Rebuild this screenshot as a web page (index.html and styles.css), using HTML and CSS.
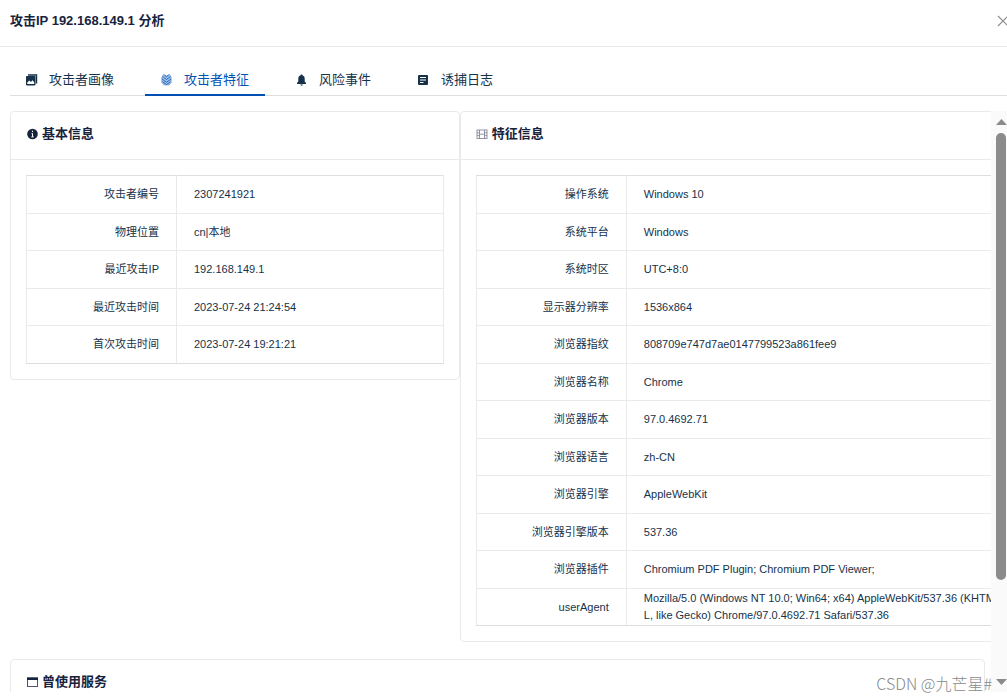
FILE: index.html
```html
<!DOCTYPE html>
<html lang="zh-CN">
<head>
<meta charset="utf-8">
<title>攻击IP 192.168.149.1 分析</title>
<link rel="stylesheet" href="styles.css">
</head>
<body>
<header class="drawer-header">
  <h1 class="drawer-title">攻击IP 192.168.149.1 分析</h1>
  <button class="close" type="button" aria-label="关闭">
    <svg width="12" height="12" viewBox="0 0 12 12" fill="none" stroke="#8c8c8c" stroke-width="1.1"><path d="M1 1l10 10M11 1L1 11"/></svg>
  </button>
</header>

<nav class="tabs" role="tablist">
  <button class="tab" type="button" role="tab" aria-selected="false">
    <svg class="icon" viewBox="0 0 13 13"><path d="M3 2h8.500v8.500" fill="none" stroke="currentColor" stroke-width="1.400"/><rect x="1" y="3" width="9.500" height="9.500" rx="1" fill="currentColor"/><path d="M2.300 11V9.500l2-2 1.600 1.600L7.600 7.200l1.600 2V11z" fill="#fff"/></svg>
    攻击者画像
  </button>
  <button class="tab active" type="button" role="tab" aria-selected="true">
    <svg class="icon" viewBox="0 0 13 13" fill="none" stroke="currentColor" stroke-width=".8"><path d="M3.500 1.500L6.500 3l3-1.500 1.700 3v5L9 12H4L1.800 9.500v-5z" fill="currentColor" fill-opacity=".35" stroke-opacity=".45" stroke-linejoin="round"/><path d="M2.500 3.500l4 3 4-3M2 6l4.500 3.200L11 6M2.500 8.700l4 2.800 4-2.800M4.500 2l2 1.800L8.500 2"/></svg>
    攻击者特征
  </button>
  <button class="tab" type="button" role="tab" aria-selected="false">
    <svg class="icon" viewBox="0 0 13 13" fill="currentColor"><path d="M5.700 2.300V1.500h1.600v.8c1.600.4 2.400 1.700 2.400 3.300v3l1.300 1.500v.9H2v-.9l1.300-1.500v-3c0-1.600.8-2.900 2.400-3.300zM5.300 11.500h2.400c0 .8-.5 1.200-1.200 1.200s-1.200-.4-1.200-1.200z"/></svg>
    风险事件
  </button>
  <button class="tab" type="button" role="tab" aria-selected="false">
    <svg class="icon" viewBox="0 0 13 13"><rect x="1" y="2" width="10" height="10" rx="1" fill="currentColor"/><path d="M3 4.500h6M3 7h6M3 9.500h3.500" stroke="#fff"/></svg>
    诱捕日志
  </button>
</nav>

<div class="scroller">
  <main class="viewport">
    <div class="cards">
      <section class="card">
        <h2 class="card-title">
          <svg class="card-icon" viewBox="0 0 12 12"><circle cx="6.500" cy="6" r="5.300" fill="#17233d"/><path d="M6.500 2.700v1.400M5.600 5.500h.9v3.300M5.300 8.900h2.400" stroke="#fff" fill="none"/></svg>
          基本信息
        </h2>
        <div class="card-body">
          <table class="info">
            <tr><th scope="row">攻击者编号</th><td>2307241921</td></tr>
            <tr><th scope="row">物理位置</th><td>cn|本地</td></tr>
            <tr><th scope="row">最近攻击IP</th><td>192.168.149.1</td></tr>
            <tr><th scope="row">最近攻击时间</th><td>2023-07-24 21:24:54</td></tr>
            <tr><th scope="row">首次攻击时间</th><td>2023-07-24 19:21:21</td></tr>
          </table>
        </div>
      </section>
      <section class="card">
        <h2 class="card-title">
          <svg class="card-icon" viewBox="0 0 12 12" fill="none" stroke="#848b9b" stroke-width=".9"><rect x="1" y="2" width="10" height="8.500"/><path d="M3.500 2v8.500M8.500 2v8.500M3.500 6.200h5M1 4.800h2.500M1 7.600h2.500M8.500 4.800H11M8.500 7.600H11"/></svg>
          特征信息
        </h2>
        <div class="card-body">
          <table class="info">
            <tr><th scope="row">操作系统</th><td>Windows 10</td></tr>
            <tr><th scope="row">系统平台</th><td>Windows</td></tr>
            <tr><th scope="row">系统时区</th><td>UTC+8:0</td></tr>
            <tr><th scope="row">显示器分辨率</th><td>1536x864</td></tr>
            <tr><th scope="row">浏览器指纹</th><td>808709e747d7ae0147799523a861fee9</td></tr>
            <tr><th scope="row">浏览器名称</th><td>Chrome</td></tr>
            <tr><th scope="row">浏览器版本</th><td>97.0.4692.71</td></tr>
            <tr><th scope="row">浏览器语言</th><td>zh-CN</td></tr>
            <tr><th scope="row">浏览器引擎</th><td>AppleWebKit</td></tr>
            <tr><th scope="row">浏览器引擎版本</th><td>537.36</td></tr>
            <tr><th scope="row">浏览器插件</th><td>Chromium PDF Plugin; Chromium PDF Viewer;</td></tr>
            <tr><th scope="row">userAgent</th><td>Mozilla/5.0 (Windows NT 10.0; Win64; x64) AppleWebKit/537.36 (KHTML, like Gecko) Chrome/97.0.4692.71 Safari/537.36</td></tr>
          </table>
        </div>
      </section>
    </div>
    <section class="card services">
      <h2 class="card-title">
        <svg class="card-icon" viewBox="0 0 12 12"><rect x="1.500" y="2" width="10" height="8.500" fill="none" stroke="#4b556b"/><path d="M1 1.500h11v2.500H1z" fill="#17233d"/></svg>
        曾使用服务
      </h2>
    </section>
  </main>
  <div class="scrollbar" aria-hidden="true">
    <svg width="11" height="6" viewBox="0 0 11 6"><path d="M5.500 0L11 6H0z" fill="#8b8b8b"/></svg>
    <div class="track"><div class="thumb"></div></div>
    <svg width="11" height="6" viewBox="0 0 11 6"><path d="M0 0h11L5.500 6z" fill="#8b8b8b"/></svg>
  </div>
  <div class="watermark">CSDN @九芒星#</div>
</div>
</body>
</html>
```
FILE: styles.css
```css
* { box-sizing: border-box; }

body {
  display: flex;
  flex-direction: column;
  height: 100vh;
  margin: 0;
  padding-bottom: 8px;
  overflow: hidden;
  background: #fff;
  color: #15324a;
  font: 11px/17px "Liberation Sans", "Noto Sans CJK SC", sans-serif;
}

button {
  padding: 0;
  border: 0;
  background: none;
  color: inherit;
  font: inherit;
}

.drawer-header {
  display: flex;
  align-items: center;
  justify-content: space-between;
  flex: none;
  height: 47px;
  padding: 0 0 4px 10px;
  border-bottom: 1px solid #e8eaec;
  overflow: hidden;
}

.drawer-title {
  margin: 0;
  color: #17233d;
  font-size: 13px;
  line-height: 20px;
  font-weight: 600;
}

.close {
  display: flex;
  margin-right: -2px;
}

.tabs {
  display: flex;
  flex: none;
  gap: 15px;
  height: 49px;
  margin-left: 10px;
  padding-top: 16px;
  border-bottom: 1px solid #dcdee2;
}

.tab {
  display: flex;
  align-items: center;
  gap: 11px;
  height: 33px;
  padding: 2px 16px 0 15px;
  border-bottom: 2px solid transparent;
  font-size: 13px;
}

.tab.active {
  border-color: #0050b3;
  color: #0052b5;
}

.icon {
  width: 13px;
  height: 13px;
}

.scroller {
  display: flex;
  position: relative;
  flex: 1;
  min-height: 0;
  margin-top: 15px;
}

.viewport {
  flex: 1;
  min-width: 0;
  padding-left: 10px;
  overflow: hidden;
}

.cards {
  display: grid;
  grid-template-columns: minmax(0, 4fr) minmax(0, 5fr);
  align-items: start;
  margin: 0 -31px 17px 0;
}

.card {
  border: 1px solid #e8eaec;
  border-radius: 4px;
}

.services {
  height: 120px;
  margin-right: 6px;
}

.card-title {
  display: flex;
  align-items: center;
  gap: 4px;
  height: 48px;
  margin: 0;
  padding: 0 15px 4px;
  border-bottom: 1px solid #e8eaec;
  color: #17233d;
  font-size: 13px;
  font-weight: 600;
}

.card-icon {
  width: 12px;
  height: 12px;
}

.card-body { padding: 15px; }

.info {
  width: 100%;
  border: 1px solid #dcdee2;
  border-collapse: collapse;
  table-layout: fixed;
}

.info tr { height: 37px; }
.info tr:nth-child(odd) { height: 38px; }

.info th,
.info td {
  padding: 0 8px 0 17px;
  border: 1px solid #e8eaec;
  font-weight: 400;
  word-break: break-all;
}

.info th {
  width: 150px;
  padding-right: 17px;
  text-align: right;
}

.info tr:first-child > * { border-top-color: #dcdee2; }
.info tr:last-child > * { border-bottom-color: #dcdee2; }

.scrollbar {
  display: flex;
  flex-direction: column;
  align-items: center;
  gap: 8px;
  width: 16px;
  padding: 8px 0 7px 4px;
  background: #fafafa;
}

.track {
  flex: 1;
  width: 10px;
}

.thumb {
  height: 83%;
  border-radius: 5px;
  background: #8b8b8b;
}

.watermark {
  position: absolute;
  right: 15px;
  bottom: 0;
  color: #8a8a8a;
  font: 300 16px/18px "Noto Sans CJK SC", sans-serif;
}
```
